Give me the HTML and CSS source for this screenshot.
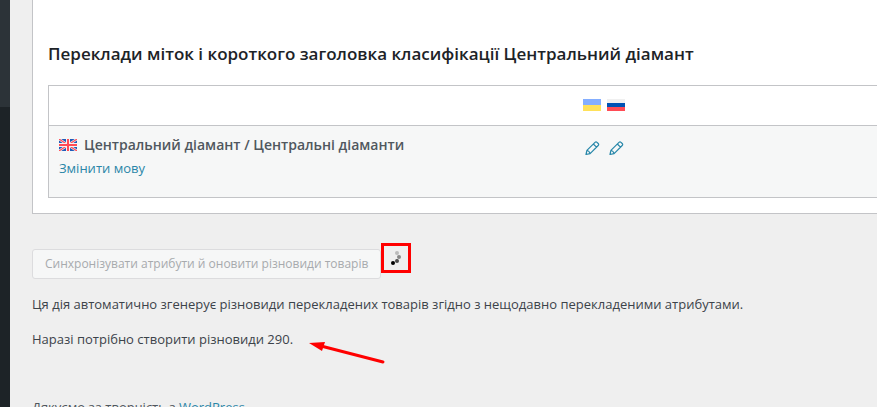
FILE: index.html
```
<!DOCTYPE html>
<html lang="uk">
<head>
<meta charset="utf-8">
<title>Переклади класифікації</title>
<link rel="stylesheet" href="styles.css">
</head>
<body>
<div class="admin">
  <aside class="menu"><div class="menu-items"></div></aside>
  <div class="content">
    <section class="panel">
      <h3 class="title">Переклади міток і короткого заголовка класифікації Центральний діамант</h3>
      <table class="labels">
        <thead>
          <tr>
            <td class="name"></td>
            <th class="langs" scope="col">
              <div class="icons">
                <svg class="flag" role="img" aria-label="Українська" viewBox="0 0 18 12"><path fill="#84aeff" d="M0 0h18v6H0z"/><path fill="#ffe15a" d="M0 6h18v6H0z"/></svg>
                <svg class="flag" role="img" aria-label="Русский" viewBox="0 0 18 12"><path fill="#f0f0f0" d="M0 0h18v4H0z"/><path fill="#0052b4" d="M0 4h18v4H0z"/><path fill="#ff4b55" d="M0 8h18v4H0z"/></svg>
              </div>
            </th>
          </tr>
        </thead>
        <tbody>
          <tr>
            <td class="name">
              <div class="term">
                <svg class="flag" role="img" aria-label="English" viewBox="0 0 18 12"><path fill="#1f5bb8" d="M0 0h18v12H0z"/><path stroke="#f5f5f5" stroke-width="2.4" d="M0 0l18 12M18 0L0 12"/><path stroke="#ff4b55" stroke-width="1.2" d="M0 0l18 12M18 0L0 12"/><path fill="#f5f5f5" d="M7 0h4v12H7zM0 4h18v4H0z"/><path fill="#ff4b55" d="M8 0h2v12H8zM0 5h18v2H0z"/></svg>
                <strong>Центральний діамант / Центральні діаманти</strong>
              </div>
              <a class="link" href="#">Змінити мову</a>
            </td>
            <td class="langs">
              <div class="icons edits">
                <a class="edit" href="#" aria-label="Редагувати українською"><svg viewBox="0 0 18 16"><path d="M3 14.500l.9-4.100 8.100-8.100q1-1 2 0l1.200 1.200q1 1 0 2L7.100 13.600zM3.900 10.400q2.400.4 3.200 3.200M10.300 4l3.200 3.200"/></svg></a>
                <a class="edit" href="#" aria-label="Редагувати російською"><svg viewBox="0 0 18 16"><path d="M3 14.500l.9-4.100 8.100-8.100q1-1 2 0l1.200 1.200q1 1 0 2L7.100 13.600zM3.900 10.400q2.400.4 3.200 3.200M10.300 4l3.200 3.200"/></svg></a>
              </div>
            </td>
          </tr>
        </tbody>
      </table>
    </section>
    <div class="sync">
      <button class="button" type="button" disabled>Синхронізувати атрибути й оновити різновиди товарів</button>
      <span class="marker"><svg viewBox="0 0 24 24" role="img" aria-label="Завантаження"><circle cx="13" cy="7" r="2" fill="#bbb"/><circle cx="15" cy="11" r="2" fill="#888"/><circle cx="13" cy="15" r="2" fill="#4a4a4a"/><circle cx="9" cy="17" r="2" fill="#000"/></svg></span>
    </div>
    <p class="note">Ця дія автоматично згенерує різновиди перекладених товарів згідно з нещодавно перекладеними атрибутами.</p>
    <p class="note count">Наразі потрібно створити різновиди 290.
      <svg class="arrow" viewBox="0 0 76 24" aria-hidden="true"><path stroke="#f00" stroke-width="3" stroke-linecap="round" d="M12 5l62 16"/><path fill="#f00" d="M0 2l16-1-3 9z"/></svg>
    </p>
    <footer class="footer">Дякуємо за творчість з <a class="link" href="#">WordPress</a>.</footer>
  </div>
</div>
</body>
</html>
```
FILE: styles.css
```
* {
  box-sizing: border-box;
}

body {
  margin: 0;
  height: 100vh;
  overflow: hidden;
  background: #efefef;
  color: #3c434a;
  font: 13px/20px "Open Sans", "Noto Sans", sans-serif;
}

.admin {
  display: flex;
  min-height: 100vh;
}

.menu {
  flex: 0 0 10px;
  background: #1d2327;
}

.menu-items {
  height: 107px;
  background: #2c3338;
}

.content {
  flex: 1;
  min-width: 0;
  padding-left: 22px;
}

.panel {
  padding: 40px 0 15px 15px;
  border: solid #c3c4c7;
  border-width: 0 0 1px 1px;
  background: #fff;
}

.title {
  margin: 0 0 18px;
  color: #1d2327;
  font-size: 17px;
  font-weight: 600;
  line-height: 27px;
  white-space: nowrap;
}

.labels {
  width: 100%;
  border: solid #c3c4c7;
  border-width: 1px 0 1px 1px;
  border-spacing: 0;
  table-layout: fixed;
}

.labels td,
.labels th {
  padding: 10px;
  text-align: left;
  vertical-align: top;
}

.labels thead td,
.labels thead th {
  height: 40px;
  border-bottom: 1px solid #c3c4c7;
}

.labels tbody td {
  height: 71px;
  background: #f6f7f7;
}

.labels .name {
  width: 63%;
}

.labels .langs {
  padding-left: 12px;
}

.icons {
  display: flex;
  align-items: center;
  gap: 6px;
  height: 18px;
}

.edits {
  height: 24px;
}

.flag {
  flex: none;
  width: 18px;
  height: 12px;
}

.term {
  display: flex;
  align-items: center;
  gap: 7px;
  height: 18px;
  margin-bottom: 4px;
  color: #50575e;
  font-size: 14px;
}

.term strong {
  font-weight: 600;
}

.link {
  color: #2a86a8;
  text-decoration: none;
}

.edit {
  width: 18px;
  height: 16px;
}

.edit svg {
  display: block;
  fill: none;
  stroke: #2787a9;
  stroke-width: 1.2;
  stroke-linejoin: round;
}

.sync {
  display: flex;
  align-items: flex-start;
  margin-top: 29px;
}

.button {
  height: 30px;
  margin-top: 6px;
  padding: 0 12px;
  border: 1px solid #dcdcde;
  border-radius: 3px;
  background: #f6f7f7;
  color: #a7aaad;
  font: inherit;
  font-size: 12px;
  white-space: nowrap;
}

.marker {
  width: 30px;
  height: 30px;
  border: 3px solid #f00;
}

.marker svg {
  display: block;
}

.note {
  margin: 15px 0 0;
  white-space: nowrap;
}

.count {
  display: flex;
  gap: 16px;
}

.arrow {
  width: 76px;
  height: 24px;
  margin-top: 12px;
}

.footer {
  margin-top: 32px;
  color: #50575e;
}
```
